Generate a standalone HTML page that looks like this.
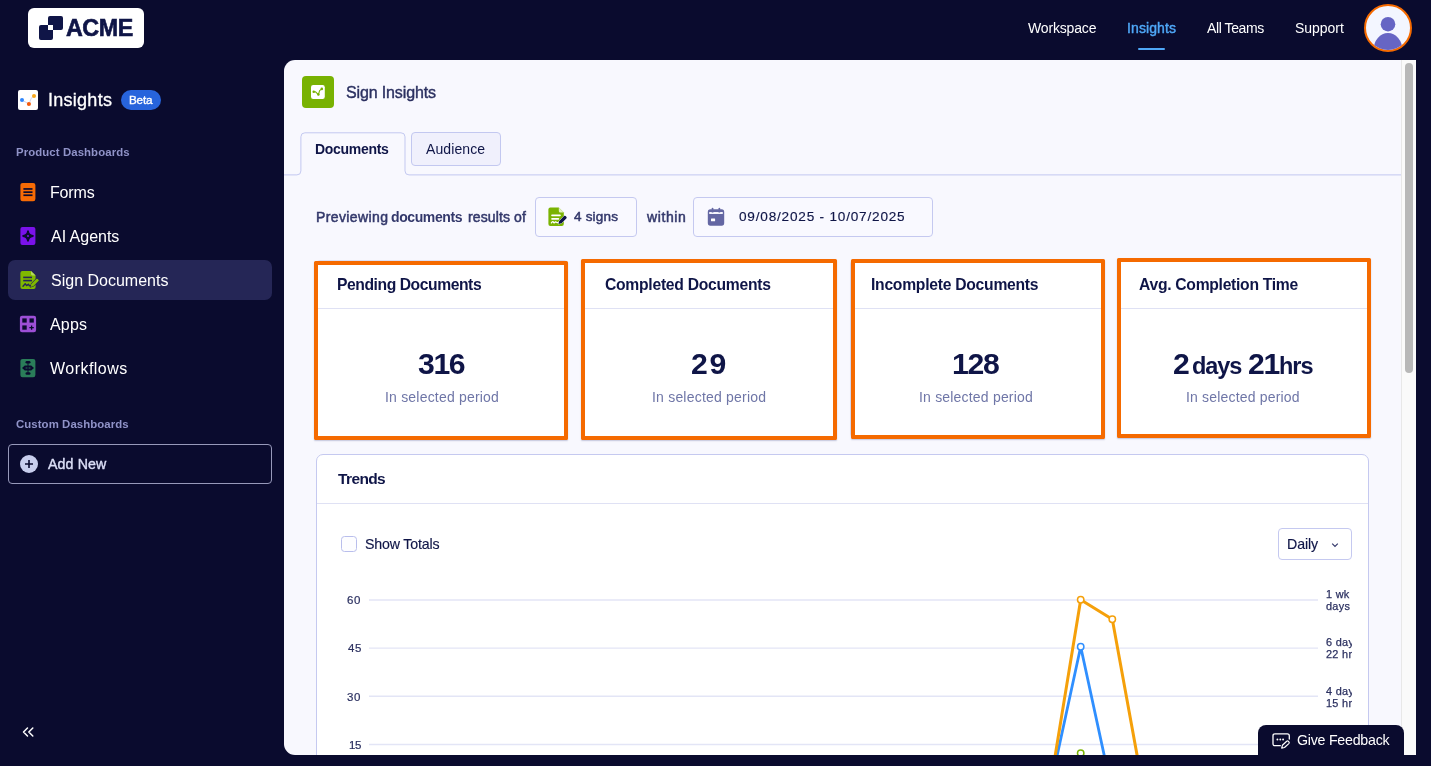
<!DOCTYPE html>
<html lang="en">
<head>
<meta charset="utf-8">
<title>Sign Insights</title>
<style>
*{box-sizing:border-box;margin:0;padding:0}
html,body{width:1431px;height:766px;overflow:hidden}
body{position:relative;background:#0a0b2e;font-family:"Liberation Sans",sans-serif;color:#fff;font-size:14px}
.abs{position:absolute}
.t{position:absolute;white-space:nowrap;line-height:20px;will-change:transform}
.med{-webkit-text-stroke:0.35px currentColor}
/* header */
.logo{left:28px;top:8px;width:116px;height:40px;background:#fff;border-radius:6px}
.logo .sq{position:absolute;background:#0f1547;border-radius:2px}
.logo .acme{left:37.5px;top:7.5px;font-size:23.5px;line-height:26px;font-weight:700;color:#0f1547;letter-spacing:-0.35px}
.nav{top:18px;font-size:14px;color:#fff}
.nav.on{color:#4fa8f8}
.navline{left:1138px;top:47.5px;width:27px;height:2px;background:#4fa8f8;border-radius:1px}
.avatar{left:1364px;top:4px;width:48px;height:48px;border-radius:50%;background:#f3f6ff;border:2px solid #f56a00;overflow:hidden}
/* sidebar */
.side-title{left:48.5px;top:88px;font-size:18px;line-height:24px;color:#fff}
.beta{left:121px;top:90px;width:40px;height:20px;border-radius:10px;background:#2764dc;font-size:12px;line-height:20px;text-align:center;color:#fff}
.label{left:16px;font-size:12px;line-height:16px;font-weight:700;color:#8d92c6}
.item{left:50.5px;font-size:16px;line-height:20px;color:#fff}
.sel{left:8px;top:260px;width:264px;height:40px;border-radius:7px;background:#252656}
.addnew{left:8px;top:444px;width:264px;height:40px;border:1px solid #9799ba;border-radius:4px}
/* panel */
.panel{left:284px;top:60px;width:1132px;height:695px;background:#f8f8fe;border-radius:11px 0 0 11px;overflow:hidden;color:#0f1547}
.panel .abs,.panel .t{position:absolute}

/* panel content (coordinates relative to panel: x-284, y-60) */
.h1{left:62.3px;top:22.5px;font-size:16px;line-height:20px;color:#2b3060;letter-spacing:-0.1px}
.tabline{left:0;top:114px;width:1118px;height:1px;background:#c5c9f0}
.tab1{left:16px;top:72px;width:105px;height:43px;border:1px solid #c5c9f0;border-bottom:none;border-radius:5px 5px 0 0;background:#f8f8fe}
.tab2{left:127.4px;top:72.4px;width:89.6px;height:33.6px;border:1px solid #c3c8f0;border-radius:4px;background:#f0f0fc}
.tabt{top:79px;font-size:14px;line-height:20px;color:#0f1547}
.flt{top:147px;font-size:14px;line-height:20px;color:#33386b}
.box{top:137px;height:40px;border:1px solid #c5c9f0;border-radius:4px;background:#f9f9ff}
.card{background:#fff;border:1px solid #dcdff5;border-radius:4px}
.oline{border:4px solid #f56a00;border-radius:1.5px;box-shadow:0 1px 1.5px rgba(60,70,130,.28)}
.ctitle{font-size:16px;line-height:20px;font-weight:700;color:#0f1547}
.cdiv{height:1px;background:#dfe1f4}
.num{font-size:30px;line-height:34px;font-weight:700;color:#0f1547;text-align:center}
.sub{font-size:14px;line-height:20px;color:#6f76a7;text-align:center;letter-spacing:0.08px}
.ax{font-size:10.9px;line-height:11.7px;color:#2b3060;letter-spacing:.3px;-webkit-text-stroke:.25px #2b3060}
.track{left:1117px;top:0;width:15px;height:695px;background:#fafafa;border-left:1px solid #e8e8e8}
.thumb{left:1121px;top:2.7px;width:8px;height:310.8px;border-radius:4px;background:#b8b8b8}
.fb{left:974px;top:665px;width:146px;height:30px;background:#0a0b2e;border-radius:8px 8px 0 0}
</style>
</head>
<body>
<!-- top bar -->
<div class="abs logo">
  <span class="sq" style="left:19.8px;top:8.1px;width:14.8px;height:14.4px"></span>
  <span class="sq" style="left:10.8px;top:17.1px;width:14.5px;height:14.5px"></span>
  <span class="abs" style="left:19.8px;top:17.1px;width:5.5px;height:5.4px;background:#fff"></span>
</div>
<span class="abs navline"></span>
<div class="abs avatar">
  <svg width="44" height="44" viewBox="0 0 44 44" style="position:absolute;left:0;top:0"><circle cx="22" cy="18.2" r="7.3" fill="#6665c4"/><ellipse cx="22" cy="44" rx="14.4" ry="17" fill="#6665c4"/></svg>
</div>

<!-- sidebar -->
<svg class="abs" style="left:18px;top:90px" width="20" height="20" viewBox="0 0 20 20"><rect width="20" height="20" rx="2" fill="#fff"/><path d="M4 10 L10.9 14 C12.4 12 12 8 16 6" stroke="#c9cdea" stroke-width="0.9" fill="none"/><circle cx="4" cy="10" r="2" fill="#2f86fb"/><circle cx="10.9" cy="14" r="2.05" fill="#f55a0a"/><circle cx="16" cy="6" r="2" fill="#f8a81c"/></svg>
<div class="abs beta"></div>
<div class="abs sel"></div>
<div class="abs addnew"></div>


<span id="acme" class="t" style="left:66.10px;top:18.23px;font-size:23.3px;font-weight:700;letter-spacing:-0.452px;color:#0f1547;-webkit-text-stroke:.6px #0f1547">ACME</span>
<span id="n1" class="t" style="left:1028.10px;top:18.35px;font-size:14px;letter-spacing:-0.160px;color:#fff">Workspace</span>
<span id="n2" class="t" style="left:1126.50px;top:18.35px;font-size:14px;letter-spacing:0.107px;color:#4fa8f8;-webkit-text-stroke:.4px #4fa8f8">Insights</span>
<span id="n3" class="t" style="left:1206.70px;top:18.35px;font-size:14px;letter-spacing:-0.410px;color:#fff">All Teams</span>
<span id="n4" class="t" style="left:1294.80px;top:18.35px;font-size:14px;letter-spacing:-0.024px;color:#fff">Support</span>
<span id="st" class="t" style="left:48.00px;top:89.66px;font-size:18px;letter-spacing:0.267px;color:#fff;-webkit-text-stroke:.3px #fff">Insights</span>
<span id="beta" class="t" style="left:129.00px;top:89.95px;font-size:11.7px;letter-spacing:-0.181px;color:#fff;-webkit-text-stroke:.35px #fff">Beta</span>
<span id="l1" class="t" style="left:16.20px;top:142.05px;font-size:11.4px;font-weight:700;letter-spacing:0.089px;color:#9093c8">Product Dashboards</span>
<span id="i1" class="t" style="left:49.60px;top:182.56px;font-size:16px;letter-spacing:-0.157px;color:#fff">Forms</span>
<span id="i2" class="t" style="left:50.60px;top:226.56px;font-size:16px;letter-spacing:-0.022px;color:#fff">AI Agents</span>
<span id="i3" class="t" style="left:50.60px;top:270.56px;font-size:16px;color:#fff">Sign Documents</span>
<span id="i4" class="t" style="left:50.40px;top:314.56px;font-size:16px;letter-spacing:0.177px;color:#fff">Apps</span>
<span id="i5" class="t" style="left:50.40px;top:358.56px;font-size:16px;letter-spacing:0.463px;color:#fff">Workflows</span>
<span id="l2" class="t" style="left:16.20px;top:414.35px;font-size:11.4px;font-weight:700;letter-spacing:0.078px;color:#9093c8">Custom Dashboards</span>
<span id="an" class="t" style="left:47.50px;top:454.08px;font-size:14.2px;letter-spacing:0.130px;color:#dcdff7;-webkit-text-stroke:.4px #dcdff7">Add New</span>
<!-- sidebar icons -->
<svg class="abs" style="left:20px;top:182px" width="16" height="20" viewBox="0 0 16 20"><rect x="0.4" y="0.9" width="15" height="18.3" rx="2.2" fill="#f76b05"/><rect x="3.4" y="6.1" width="9.1" height="1.7" fill="#0a0b2e"/><rect x="3.4" y="9.3" width="9.1" height="1.7" fill="#0a0b2e"/><rect x="3.4" y="12.4" width="9.1" height="1.7" fill="#0a0b2e"/></svg>
<svg class="abs" style="left:20px;top:226px" width="16" height="20" viewBox="0 0 16 20"><rect x="0.4" y="1" width="15" height="18" rx="2" fill="#7a12ea"/><path d="M8 4.2 Q8.7 4.2 8.9 5 C9.4 7.6 10.3 8.6 13 9.1 Q13.8 9.3 13.8 10 Q13.8 10.7 13 10.9 C10.3 11.4 9.4 12.4 8.9 15 Q8.7 15.8 8 15.8 Q7.3 15.8 7.1 15 C6.6 12.4 5.7 11.4 3 10.9 Q2.2 10.7 2.2 10 Q2.2 9.3 3 9.1 C5.7 8.6 6.6 7.6 7.1 5 Q7.3 4.2 8 4.2Z" fill="#0a0b2e"/><circle cx="8" cy="10" r="1" fill="#7a12ea"/></svg>
<svg class="abs" style="left:20px;top:270px" width="19" height="20" viewBox="0 0 19 20"><path d="M2.4 0.9 H11 L15.6 5.5 V16.9 Q15.6 18.9 13.6 18.9 H2.4 Q0.4 18.9 0.4 16.9 V2.9 Q0.4 0.9 2.4 0.9Z" fill="#7fb800"/><path d="M11 0.9 L15.6 5.5 H12.4 Q11 5.5 11 4.1Z" fill="#b4d95c"/><rect x="3.2" y="6.6" width="8.8" height="1.6" fill="#252656"/><rect x="3.2" y="9.8" width="8.8" height="1.6" fill="#252656"/><path d="M3 16.2 L5.2 13.8 L6.6 15.6 L8.4 14.2 L9.4 15.8 L11 15.6" stroke="#252656" stroke-width="1.4" fill="none" stroke-linejoin="round" stroke-linecap="round"/><path d="M10.6 17 L11.3 14 L16.3 9 Q17 8.3 17.7 9 L18.4 9.7 Q19.1 10.4 18.4 11.1 L13.4 16.1Z" fill="#7fb800" stroke="#252656" stroke-width="1.1" paint-order="stroke"/></svg>
<svg class="abs" style="left:19px;top:315px" width="18" height="18" viewBox="0 0 18 18"><rect x="0.9" y="0.8" width="16.2" height="16.4" rx="2.2" fill="#9d4fd6"/><rect x="3.3" y="3.4" width="4.4" height="4.2" fill="#0a0b2e"/><rect x="10.5" y="3.4" width="4.3" height="4.2" fill="#0a0b2e"/><rect x="3.3" y="10.4" width="4.4" height="4.3" fill="#0a0b2e"/><path d="M12.6 10.4 V14.8 M10.4 12.6 H14.8" stroke="#0a0b2e" stroke-width="1.3"/></svg>
<svg class="abs" style="left:20px;top:358px" width="16" height="20" viewBox="0 0 16 20"><rect x="0.4" y="0.9" width="15" height="18.3" rx="2.2" fill="#2a7d59"/><rect x="5.5" y="3.1" width="5" height="2.5" rx="1.25" fill="#0a0b2e"/><rect x="5.5" y="14.3" width="5" height="2.5" rx="1.25" fill="#0a0b2e"/><rect x="7.5" y="4.5" width="1" height="11" fill="#0a0b2e"/><path d="M2 10 L4.8 7.5 H11.2 L14 10 L11.2 12.5 H4.8Z" fill="#0a0b2e"/><rect x="5.6" y="9.4" width="1.8" height="1.2" fill="#2a7d59" opacity="0.75"/><rect x="8.6" y="9.4" width="1.8" height="1.2" fill="#2a7d59" opacity="0.75"/></svg>
<svg class="abs" style="left:20px;top:455px" width="18" height="18" viewBox="0 0 18 18"><circle cx="9" cy="9" r="9" fill="#c8ceed"/><path d="M9 5 V13 M5 9 H13" stroke="#0a0b2e" stroke-width="1.6"/></svg>
<svg class="abs" style="left:22px;top:726px" width="12" height="12" viewBox="0 0 12 12"><path d="M5.5 2 L1.5 6 L5.5 10 M10.8 2 L6.8 6 L10.8 10" stroke="#fff" stroke-width="1.5" fill="none" stroke-linecap="round" stroke-linejoin="round"/></svg>

<!-- main panel -->
<div class="abs panel" id="panel">
  <!-- header -->
  <div class="abs" style="left:18px;top:16px;width:32px;height:32px;border-radius:4px;background:#78b202"></div>
  <svg class="abs" style="left:27.2px;top:25.1px" width="14" height="14" viewBox="0 0 14 14"><rect width="13.8" height="13.9" rx="2.2" fill="#fff"/><path d="M2.7 6.7 L4.6 6.9 L7.4 9.6 L8.6 5.6 L10.8 3.9" stroke="#78b202" stroke-width="1.1" fill="none" stroke-linejoin="round"/><circle cx="2.7" cy="6.7" r="1.25" fill="#78b202"/><circle cx="7.4" cy="9.6" r="1.25" fill="#78b202"/><circle cx="10.8" cy="3.9" r="1.3" fill="#78b202"/></svg>
  <!-- tabs -->
  <div class="abs tab2"></div>
  <svg class="abs" style="left:0;top:70px" width="1118" height="48" viewBox="0 70 1118 48"><path d="M0 114.9 H12.9 Q16.9 114.9 16.9 110.9 V76.8 Q16.9 72.8 20.9 72.8 H117 Q121 72.8 121 76.8 V110.9 Q121 114.9 125 114.9 H1118" stroke="#c3c8f0" stroke-width="1" fill="none"/></svg>
  <!-- filter row -->
  <div class="abs box" style="left:251px;width:102px"></div>
  <div class="abs box" style="left:409px;width:240px"></div>
  <svg class="abs" style="left:264px;top:147px" width="19" height="20" viewBox="0 0 19 20"><path d="M2.4 0.6 H10.8 L15.8 5.6 V17.1 Q15.8 19.1 13.8 19.1 H2.4 Q0.4 19.1 0.4 17.1 V2.6 Q0.4 0.6 2.4 0.6Z" fill="#7ab302"/><path d="M10.8 0.6 L15.8 5.6 H12.4 Q10.8 5.6 10.8 4Z" fill="#e4f0c4"/><rect x="3.2" y="7.5" width="9.6" height="1.7" rx="0.8" fill="#fff"/><rect x="3.2" y="11" width="8" height="1.7" rx="0.8" fill="#fff"/><path d="M3.4 15.9 C4.4 14.4 5.2 14.4 5.6 15.4 C6 16.4 6.8 15.2 7.6 14.8 C8.4 14.6 8.2 15.8 9.4 15.6 L12 15.3" stroke="#fff" stroke-width="1.3" fill="none" stroke-linecap="round"/><path d="M10.4 17 L11.2 13.9 L16 9.1 Q16.8 8.3 17.6 9.1 L18.3 9.8 Q19.1 10.6 18.3 11.4 L13.5 16.2Z" fill="#0f1547" stroke="#f9f9ff" stroke-width="0.9" paint-order="stroke"/></svg>
  <svg class="abs" style="left:423px;top:147px" width="18" height="20" viewBox="0 0 18 20"><rect x="0.8" y="2.3" width="16.4" height="16.4" rx="2.6" fill="#6467a3"/><rect x="4.7" y="0.8" width="1.7" height="4" rx="0.8" fill="#6467a3"/><rect x="11.5" y="0.8" width="1.7" height="4" rx="0.8" fill="#6467a3"/><path d="M2.2 4.9 H4.7 V5.6 H6.4 V4.9 H11.5 V5.6 H13.2 V4.9 H15.8 V7 H2.2Z" fill="#f4f4fc"/><rect x="4" y="11.4" width="4.1" height="2.9" rx="0.5" fill="#fff"/></svg>
  <!-- cards -->
  <div class="abs card" style="left:32px;top:200px;width:252px;height:178px"></div>
  <div class="abs card" style="left:299px;top:200px;width:252px;height:178px"></div>
  <div class="abs card" style="left:566px;top:200px;width:252px;height:178px"></div>
  <div class="abs card" style="left:834px;top:200px;width:252px;height:178px"></div>
  <div class="abs cdiv" style="left:33px;top:248px;width:250px"></div>
  <div class="abs cdiv" style="left:300px;top:248px;width:250px"></div>
  <div class="abs cdiv" style="left:567px;top:248px;width:251px"></div>
  <div class="abs cdiv" style="left:835px;top:248px;width:250px"></div>
  <div class="abs oline" style="left:30px;top:200.6px;width:254.3px;height:179.6px"></div>
  <div class="abs oline" style="left:296.5px;top:199.4px;width:256.5px;height:180.6px"></div>
  <div class="abs oline" style="left:567px;top:199.1px;width:254px;height:180px"></div>
  <div class="abs oline" style="left:833.1px;top:198.3px;width:253.6px;height:180px"></div>
  <!-- trends -->
  <div class="abs" style="left:32px;top:394px;width:1053px;height:320px;background:#fff;border:1px solid #c5c9f0;border-radius:7px"></div>
  <div class="abs" style="left:33px;top:443px;width:1051px;height:1px;background:#dfe1f4"></div>
  <div class="abs" style="left:57px;top:476.1px;width:16px;height:15.6px;border:1.7px solid #b9beec;border-radius:3.5px;background:#fdfdff"></div>
  <div class="abs" style="left:994px;top:468px;width:74px;height:32px;border:1px solid #c5c9f0;border-radius:4px;background:#fff"></div>
  <svg class="abs" style="left:1046px;top:480px" width="10" height="10" viewBox="0 0 10 10"><path d="M2.2 3.6 L5 6.4 L7.8 3.6" stroke="#33386b" stroke-width="1.2" fill="none"/></svg>
  <!-- chart -->
  <svg class="abs" style="left:32px;top:520px" width="1053" height="175" viewBox="316 580 1053 175">
    <g stroke="#e3e5f6" stroke-width="1.4"><path d="M369 600H1318M369 648.15H1318M369 696.3H1318M369 744.45H1318"/></g>
    <path d="M1049.1 792.6 L1080.7 753.1 L1112.3 792.6" stroke="#78b202" stroke-width="2.6" fill="none"/>
    <path d="M1049.1 792.6 L1080.7 646.8 L1112.3 792.6" stroke="#2f8fff" stroke-width="2.8" fill="none" stroke-linejoin="round"/>
    <path d="M1049.1 792.6 L1080.7 599.7 L1112.3 619.2 L1143.9 792.6" stroke="#f5a00a" stroke-width="3" fill="none" stroke-linejoin="round"/>
    <circle cx="1080.7" cy="753.1" r="3.2" fill="#fff" stroke="#78b202" stroke-width="1.5"/>
    <circle cx="1080.7" cy="646.8" r="3.2" fill="#fff" stroke="#2f8fff" stroke-width="1.5"/>
    <circle cx="1080.7" cy="599.7" r="3.2" fill="#fff" stroke="#f5a00a" stroke-width="1.5"/>
    <circle cx="1112.3" cy="619.2" r="3.2" fill="#fff" stroke="#f5a00a" stroke-width="1.5"/>
  </svg>
  <div class="abs" style="left:1042px;top:520px;width:26px;height:175px;overflow:hidden">
    <span id="t41" class="t ax" style="left:0;top:8.6px">1 wk<br>days</span>
    <span id="t42" class="t ax" style="left:0;top:56.8px">6 days<br>22 hrs</span>
    <span id="t43" class="t ax" style="left:0;top:105.5px">4 days<br>15 hrs</span>
  </div>
  <!-- scrollbar -->
  <div class="abs track"></div>
  <div class="abs thumb"></div>
  <!-- feedback -->
  <div class="abs fb"></div>
  <svg class="abs" style="left:987.7px;top:671.5px" width="19" height="18" viewBox="0 0 19 18"><path d="M8.3 13.7 H3 Q1 13.7 1 11.7 V3.8 Q1 1.8 3 1.8 H15.3 Q17.3 1.8 17.3 3.8 V7" stroke="#fff" stroke-width="1.3" fill="none" stroke-linecap="round"/><circle cx="5.4" cy="7.5" r="0.95" fill="#fff"/><circle cx="8.3" cy="7.5" r="0.95" fill="#fff"/><circle cx="11.1" cy="7.5" r="0.95" fill="#fff"/><path d="M9.7 16.1 L10.4 13.3 L14.7 9.3 Q15.6 8.5 16.5 9.4 L16.9 9.8 Q17.7 10.7 16.8 11.6 L12.5 15.5 Z" stroke="#fff" stroke-width="1.2" fill="none" stroke-linejoin="round"/></svg>
  <span id="h1" class="t" style="left:62.30px;top:23.06px;font-size:16px;letter-spacing:-0.134px;color:#2b3060;-webkit-text-stroke:.4px #2b3060">Sign Insights</span>
  <span id="tb1" class="t" style="left:31.30px;top:79.35px;font-size:14px;font-weight:700;letter-spacing:-0.294px;color:#0f1547">Documents</span>
  <span id="tb2" class="t" style="left:142.00px;top:79.35px;font-size:14px;letter-spacing:0.101px;color:#0f1547">Audience</span>
  <span id="f1" class="t" style="left:31.60px;top:147.15px;font-size:14px;letter-spacing:0.390px;color:#33386b;-webkit-text-stroke:.5px #33386b">Previewing</span>
  <span id="f2" class="t" style="left:107.30px;top:147.15px;font-size:14px;font-weight:700;letter-spacing:-0.399px;color:#33386b">documents</span>
  <span id="f3" class="t" style="left:184.00px;top:147.15px;font-size:14px;letter-spacing:0.110px;color:#33386b;-webkit-text-stroke:.5px #33386b">results of</span>
  <span id="f4" class="t" style="left:289.90px;top:147.12px;font-size:13.5px;letter-spacing:0.196px;color:#33386b;-webkit-text-stroke:.5px #33386b">4 signs</span>
  <span id="f5" class="t" style="left:363.00px;top:147.15px;font-size:14px;letter-spacing:0.599px;color:#33386b;-webkit-text-stroke:.5px #33386b">within</span>
  <span id="f6" class="t" style="left:454.90px;top:147.09px;font-size:13.6px;letter-spacing:0.796px;color:#0f1547;-webkit-text-stroke:.15px #0f1547">09/08/2025 - 10/07/2025</span>
  <span id="c1" class="t" style="left:52.50px;top:214.66px;font-size:15.7px;font-weight:700;letter-spacing:-0.440px;color:#0f1547">Pending Documents</span>
  <span id="c2" class="t" style="left:320.90px;top:214.66px;font-size:15.7px;font-weight:700;letter-spacing:-0.273px;color:#0f1547">Completed Documents</span>
  <span id="c3" class="t" style="left:587.20px;top:214.66px;font-size:15.7px;font-weight:700;letter-spacing:-0.267px;color:#0f1547">Incomplete Documents</span>
  <span id="c4" class="t" style="left:855.00px;top:214.66px;font-size:15.7px;font-weight:700;letter-spacing:-0.290px;color:#0f1547">Avg. Completion Time</span>
  <span id="v1" class="t" style="left:134.32px;top:293.54px;font-size:30.2px;font-weight:700;letter-spacing:-1.359px;color:#0f1547">316</span>
  <span id="v2" class="t" style="left:407.15px;top:293.54px;font-size:30.2px;font-weight:700;letter-spacing:1.812px;color:#0f1547">29</span>
  <span id="v3" class="t" style="left:667.90px;top:293.54px;font-size:30.2px;font-weight:700;letter-spacing:-1.289px;color:#0f1547">128</span>
  <span id="v4a" class="t" style="left:889.20px;top:293.54px;font-size:30.2px;font-weight:700;color:#0f1547">2</span>
  <span id="v4b" class="t" style="left:908.44px;top:295.86px;font-size:23.5px;font-weight:700;letter-spacing:-1.057px;color:#0f1547">days</span>
  <span id="v4c" class="t" style="left:963.99px;top:293.54px;font-size:30.2px;font-weight:700;letter-spacing:-1.359px;color:#0f1547">21</span>
  <span id="v4d" class="t" style="left:995.46px;top:295.86px;font-size:23.5px;font-weight:700;letter-spacing:-1.057px;color:#0f1547">hrs</span>
  <span id="s1" class="t" style="left:100.50px;top:327.25px;font-size:14px;letter-spacing:0.198px;color:#6f76a7">In selected period</span>
  <span id="s2" class="t" style="left:367.60px;top:327.25px;font-size:14px;letter-spacing:0.204px;color:#6f76a7">In selected period</span>
  <span id="s3" class="t" style="left:635.20px;top:327.25px;font-size:14px;letter-spacing:0.192px;color:#6f76a7">In selected period</span>
  <span id="s4" class="t" style="left:902.30px;top:327.25px;font-size:14px;letter-spacing:0.181px;color:#6f76a7">In selected period</span>
  <span id="tr" class="t" style="left:53.50px;top:409.43px;font-size:15.5px;font-weight:700;letter-spacing:-0.620px;color:#0f1547">Trends</span>
  <span id="sh" class="t" style="left:81.30px;top:474.08px;font-size:14.2px;letter-spacing:-0.170px;color:#0f1547;-webkit-text-stroke:.15px #0f1547">Show Totals</span>
  <span id="dl" class="t" style="left:1002.70px;top:474.28px;font-size:14.2px;letter-spacing:-0.110px;color:#0f1547;-webkit-text-stroke:.15px #0f1547">Daily</span>
  <span id="y1" class="t" style="left:63.41px;top:530.22px;font-size:11.5px;letter-spacing:0.690px;color:#2b3060;-webkit-text-stroke:.2px #2b3060">60</span>
  <span id="y2" class="t" style="left:63.60px;top:578.32px;font-size:11.5px;letter-spacing:0.504px;color:#2b3060;-webkit-text-stroke:.2px #2b3060">45</span>
  <span id="y3" class="t" style="left:63.41px;top:626.52px;font-size:11.5px;letter-spacing:0.690px;color:#2b3060;-webkit-text-stroke:.2px #2b3060">30</span>
  <span id="y4" class="t" style="left:64.62px;top:674.62px;font-size:11.5px;letter-spacing:-0.517px;color:#2b3060;-webkit-text-stroke:.2px #2b3060">15</span>
  <span id="gf" class="t" style="left:1012.70px;top:669.78px;font-size:14.2px;letter-spacing:-0.235px;color:#fff">Give Feedback</span>
</div>
</body>
</html>
